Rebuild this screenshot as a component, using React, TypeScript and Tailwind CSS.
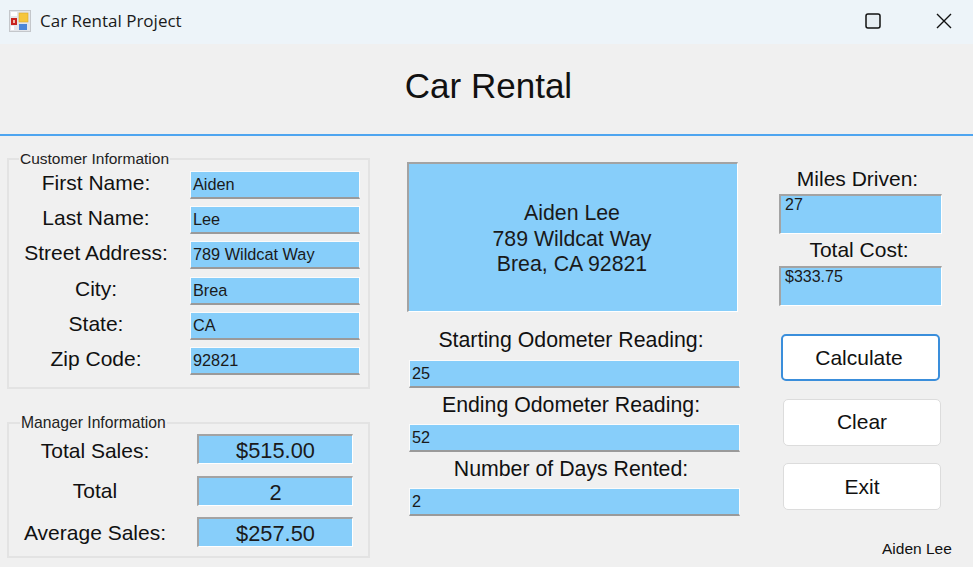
const customerRows = [
  { label: 'First Name:', value: 'Aiden' },
  { label: 'Last Name:', value: 'Lee' },
  { label: 'Street Address:', value: '789 Wildcat Way' },
  { label: 'City:', value: 'Brea' },
  { label: 'State:', value: 'CA' },
  { label: 'Zip Code:', value: '92821' },
];

const managerRows = [
  { label: 'Total Sales:', value: '$515.00', h: 'h-[42px]', top: 'mt-[2px]' },
  { label: 'Total', value: '2', h: 'h-[41px]', top: 'mt-0' },
  { label: 'Average Sales:', value: '$257.50', h: 'h-[42px]', top: 'mt-[1px]' },
];

function AppIcon() {
  return (
    <svg width="22" height="22" viewBox="0 0 22 22" className="shrink-0">
      <rect x="0.5" y="0.5" width="21" height="21" fill="#e4e6ea" stroke="#c4c7cb" />
      <rect x="2" y="2" width="6" height="4" fill="#fff" />
      <rect x="2" y="8" width="6" height="7" fill="#c8231f" />
      <rect x="4" y="10" width="2" height="3" fill="#f3b7a8" />
      <rect x="2" y="16" width="3" height="4" fill="#fff" />
      <rect x="10" y="3" width="9" height="9" fill="#f6c63d" stroke="#d9a92e" strokeWidth="0.6" />
      <rect x="10" y="14" width="8" height="6" fill="#4d86d8" />
    </svg>
  );
}

function UnderlinedBox({ value, className }: { value: string; className: string }) {
  return (
    <div className={`bg-[#87cefa] border-b-2 border-b-[#9a9a9a] border-t border-x border-[#fbfbfb] text-[16.3px] leading-[24px] pl-[2px] text-[#1a1a1a] whitespace-nowrap ${className}`}>
      {value}
    </div>
  );
}

function SunkenBox({ value, className }: { value: string; className: string }) {
  return (
    <div className={`bg-[#87cefa] border-t-2 border-l-2 border-t-[#a3a3a3] border-l-[#a3a3a3] border-r border-b border-r-white border-b-white text-[#1a1a1a] whitespace-nowrap ${className}`}>
      {value}
    </div>
  );
}

function ActionButton({ label, active }: { label: string; active?: boolean }) {
  return (
    <button className={`h-[47px] bg-white rounded-[5px] text-[21px] text-[#111] ${active ? 'w-[159px] border-2 border-[#3a8edb] pr-[3px]' : 'w-[158px] ml-[2px] border border-[#dcdcdc]'}`}>
      {label}
    </button>
  );
}

export default function App() {
  return (
    <div className="w-[973px] h-[567px] overflow-hidden bg-[#f0f0f0] text-[#111] font-['Liberation_Sans',Arial,sans-serif]">
      <div className="h-[44px] bg-[#edf4f9] flex items-center pl-[9px] pb-[3px]">
        <AppIcon />
        <span className="ml-[9px] text-[17px] text-[#1a1a1a] font-['Open_Sans',sans-serif]">Car Rental Project</span>
        <div className="ml-auto flex items-center">
          <svg width="16" height="16" viewBox="0 0 16 16" className="mr-[55px]">
            <rect x="1" y="1" width="14" height="14" rx="2" fill="#e6edf2" stroke="#111" strokeWidth="1.5" />
          </svg>
          <svg width="16" height="16" viewBox="0 0 16 16" className="mr-[21px]">
            <path d="M1 1 L15 15 M15 1 L1 15" stroke="#111" strokeWidth="1.4" fill="none" />
          </svg>
        </div>
      </div>

      <div className="h-[92px] border-b-2 border-[#4ea5f0] flex items-center justify-center pb-[6px] pl-[4px]">
        <h1 className="text-[35px] text-[#111]">Car Rental</h1>
      </div>

      <div className="flex">
        <div className="w-[407px] pl-[7px] pt-[14px]">
          <fieldset className="w-[363px] h-[239px] border-2 border-[#e3e3e3] pt-[3px]">
            <legend className="ml-[10px] px-[1px] text-[15.5px] leading-[18px] text-[#222]">Customer Information</legend>
            {customerRows.map((row) => (
              <div key={row.label} className="h-[35.2px] flex">
                <div className="w-[174px] mr-[7px] text-center text-[21px] leading-[24px] whitespace-nowrap">{row.label}</div>
                <UnderlinedBox value={row.value} className="w-[170px] h-[28px]" />
              </div>
            ))}
          </fieldset>
          <fieldset className="w-[363px] h-[144px] mt-[25px] border-2 border-[#e3e3e3] pt-[2px]">
            <legend className="ml-[11px] px-[1px] text-[15.7px] leading-[18px] text-[#222]">Manager Information</legend>
            {managerRows.map((row) => (
              <div key={row.label} className={`${row.h} flex`}>
                <div className={`w-[172px] mr-[16px] text-center text-[21px] leading-[30px] whitespace-nowrap ${row.top}`}>{row.label}</div>
                <SunkenBox value={row.value} className="w-[156px] h-[30px] text-[21.8px] leading-[29px] text-center" />
              </div>
            ))}
          </fieldset>
        </div>

        <div className="w-[372px] pt-[26px]">
          <div className="w-[331px] h-[150px] pt-[4px] pr-[2px] bg-[#87cefa] border-t-2 border-l-2 border-t-[#a3a3a3] border-l-[#a3a3a3] border-r border-b border-r-white border-b-white flex flex-col items-center justify-center text-[21.3px] leading-[25.5px] text-[#1a1a1a]">
            <div>Aiden Lee</div>
            <div>789 Wildcat Way</div>
            <div>Brea, CA 92821</div>
          </div>
          <div className="w-[331px] ml-[2px] mt-[16px] text-center text-[21.3px]">
            <div className="leading-[24px] pr-[7px]">Starting Odometer Reading:</div>
            <UnderlinedBox value="25" className="mt-[8px] h-[28px] text-left" />
            <div className="leading-[24px] mt-[5px] pr-[7px]">Ending Odometer Reading:</div>
            <UnderlinedBox value="52" className="mt-[7px] h-[28px] text-left" />
            <div className="leading-[24px] mt-[5px] pr-[7px]">Number of Days Rented:</div>
            <UnderlinedBox value="2" className="mt-[7px] h-[28px] text-left" />
          </div>
        </div>

        <div className="w-[194px] pt-[31px]">
          <div className="w-[163px] pr-[6px] text-center text-[21px] leading-[24px]">Miles Driven:</div>
          <SunkenBox value="27" className="w-[163px] h-[40px] mt-[3px] pl-[4px] text-[16px] leading-[18px]" />
          <div className="w-[163px] pr-[3px] text-center text-[21px] leading-[24px] mt-[4px]">Total Cost:</div>
          <SunkenBox value="$333.75" className="w-[163px] h-[40px] mt-[4px] pl-[4px] text-[16px] leading-[18px]" />
          <div className="ml-[2px] mt-[28px] flex flex-col gap-[17.5px]">
            <ActionButton label="Calculate" active />
            <ActionButton label="Clear" />
            <ActionButton label="Exit" />
          </div>
          <div className="mt-[30px] ml-[103px] text-[15.5px] leading-[18px] whitespace-nowrap">Aiden Lee</div>
        </div>
      </div>
    </div>
  );
}
